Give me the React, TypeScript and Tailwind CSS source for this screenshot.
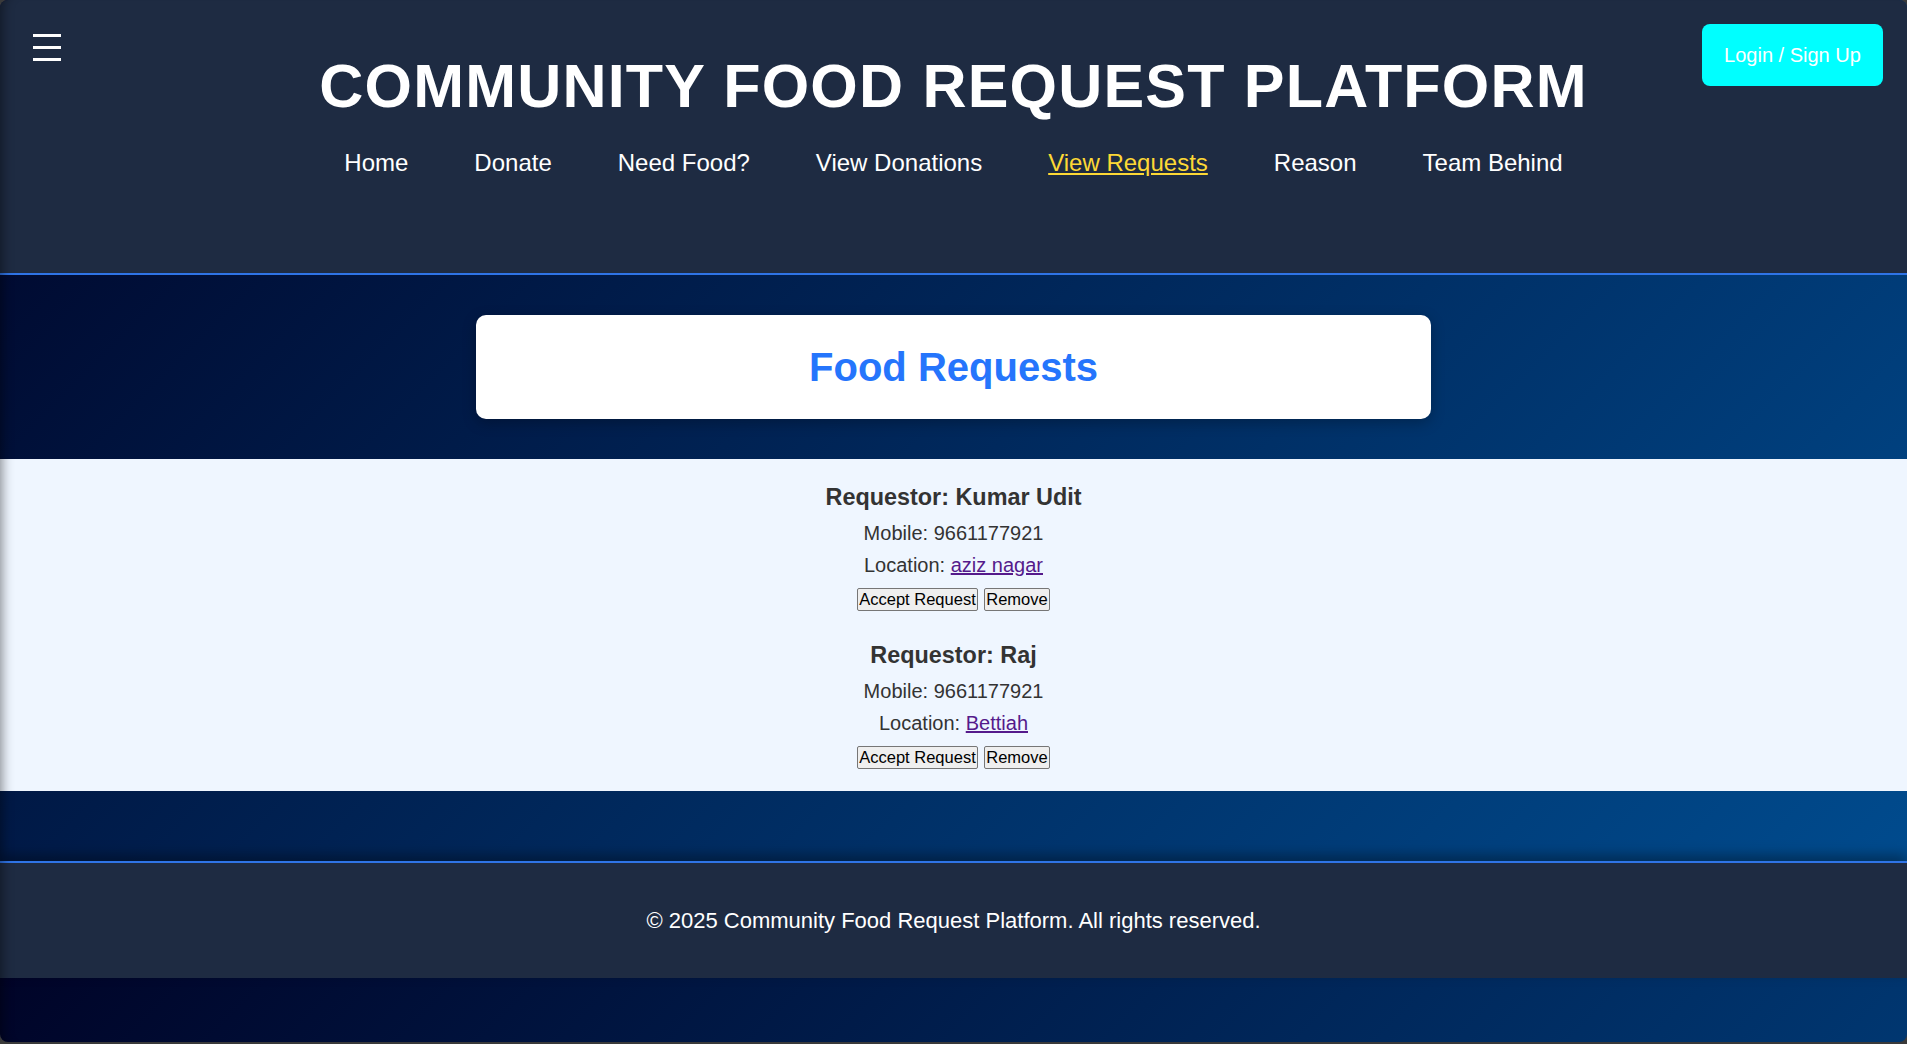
export default function App() {
  const navItems = [
    "Home",
    "Donate",
    "Need Food?",
    "View Donations",
    "View Requests",
    "Reason",
    "Team Behind",
  ];
  const requests = [
    { name: "Kumar Udit", mobile: "9661177921", location: "aziz nagar" },
    { name: "Raj", mobile: "9661177921", location: "Bettiah" },
  ];
  return (
    <div className="h-[1044px] w-full bg-[#3a3a3a] font-['Liberation_Sans',Arial,Helvetica,sans-serif]">
      <div className="relative h-[1042px] overflow-hidden rounded-[8px] bg-[linear-gradient(135deg,#000428,#004e92)] bg-[length:100%_978px] bg-repeat-y">
        <header className="relative flex h-[275px] flex-col items-center border-b-2 border-[#2f74e6] bg-[#1e2b42]">
          <button
            aria-label="menu"
            className="absolute left-[33px] top-[34px] flex flex-col gap-[9px]"
          >
            <span className="block h-[3px] w-[28px] bg-white" />
            <span className="block h-[3px] w-[28px] bg-white" />
            <span className="block h-[3px] w-[28px] bg-white" />
          </button>
          <h1 className="pt-[51px] text-[61px] font-bold leading-[70px] tracking-[1.2px] text-white">
            COMMUNITY FOOD REQUEST PLATFORM
          </h1>
          <nav className="mt-[28px] flex gap-[66px] text-[24px] leading-[28px]">
            {navItems.map((item) =>
              item === "View Requests" ? (
                <a key={item} href="#" className="text-[#fdd835] underline">
                  {item}
                </a>
              ) : (
                <a key={item} href="#" className="text-white">
                  {item}
                </a>
              )
            )}
          </nav>
          <button className="absolute right-[24px] top-[24px] flex h-[62px] w-[181px] items-center justify-center rounded-[8px] bg-[#00ffff] text-[20px] text-white">
            Login / Sign Up
          </button>
        </header>

        <section className="flex justify-center py-[40px]">
          <div className="flex h-[104px] w-[955px] items-center justify-center rounded-[10px] bg-white shadow-[0_4px_14px_rgba(0,0,0,0.25)]">
            <h2 className="text-[40px] font-bold text-[#2575fc]">Food Requests</h2>
          </div>
        </section>

        <section className="bg-[#eff6ff] pb-[22px] pt-[24px] text-center text-[#333333]">
          {requests.map((r, i) => (
            <div key={i} className={i > 0 ? "mt-[30px]" : ""}>
              <h3 className="text-[23.4px] font-bold leading-[28px]">
                Requestor: {r.name}
              </h3>
              <p className="mt-[10px] text-[20px] leading-[24px]">Mobile: {r.mobile}</p>
              <p className="mt-[8px] text-[20px] leading-[24px]">
                Location:{" "}
                <a href="#" className="text-[#551a8b] underline">
                  {r.location}
                </a>
              </p>
              <div className="mt-[11px] flex justify-center gap-[6px]">
                <button className="h-[23px] w-[121px] rounded-[2px] border border-[#767676] bg-[#efefef] text-[16.5px] leading-none text-black">
                  Accept Request
                </button>
                <button className="h-[23px] w-[66px] rounded-[2px] border border-[#767676] bg-[#efefef] text-[16.5px] leading-none text-black">
                  Remove
                </button>
              </div>
            </div>
          ))}
        </section>

        <footer className="mt-[70px] flex h-[117px] items-center justify-center border-t-2 border-[#2f74e6] bg-[#1e2b42] text-[22px] text-white shadow-[0_-6px_12px_rgba(0,0,0,0.35)]">
          © 2025 Community Food Request Platform. All rights reserved.
        </footer>

        <div className="pointer-events-none absolute inset-0 rounded-[8px] shadow-[inset_14px_0_12px_-12px_rgba(0,0,0,0.45)]" />
      </div>
    </div>
  );
}
